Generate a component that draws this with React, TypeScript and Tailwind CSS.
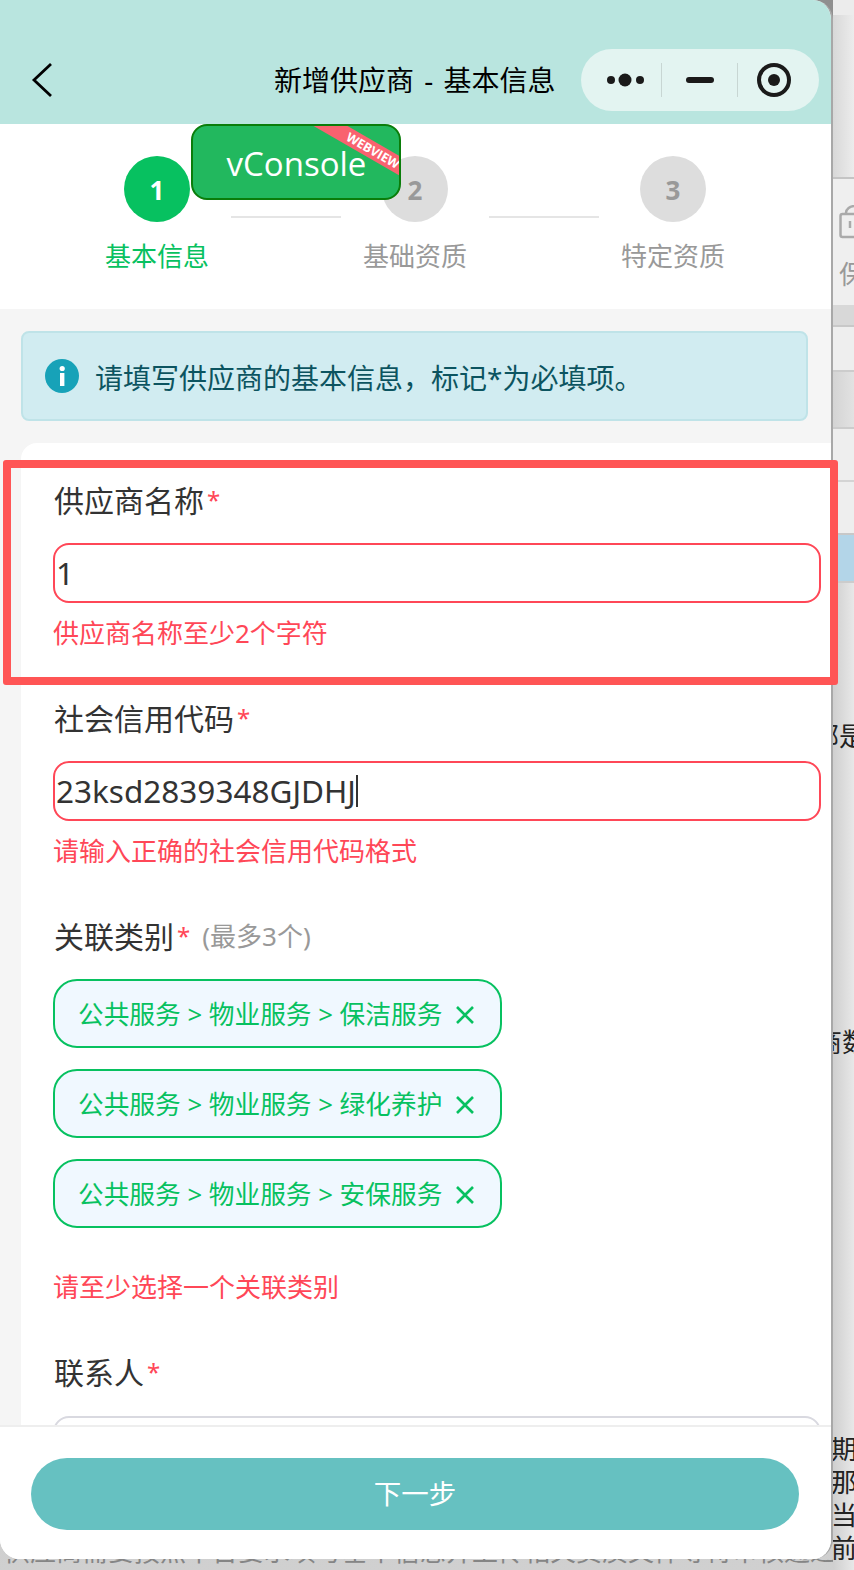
const cjk = "font-['Noto_Sans','Noto_Sans_CJK_SC',sans-serif]";

function Capsule() {
  return (
    <div className="absolute left-[581px] top-[49px] flex h-[62px] w-[238px] items-center rounded-full bg-[#e3f4f1]">
      <div className="flex w-[80px] justify-center pl-[9px]">
        <svg width="44" height="14" viewBox="0 0 44 14" fill="#1a1a1a">
          <circle cx="7" cy="7" r="4" />
          <circle cx="21" cy="7" r="6.5" />
          <circle cx="36" cy="7" r="4" />
        </svg>
      </div>
      <div className="h-[34px] w-[1px] bg-[#c8d6d3]" />
      <div className="flex w-[75px] justify-center">
        <div className="h-[6px] w-[28px] rounded-full bg-[#1a1a1a]" />
      </div>
      <div className="h-[34px] w-[1px] bg-[#c8d6d3]" />
      <div className="flex w-[71px] justify-center">
        <svg width="34" height="34" viewBox="0 0 34 34">
          <circle cx="17" cy="17" r="15" fill="none" stroke="#1a1a1a" strokeWidth="4" />
          <circle cx="17" cy="17" r="6" fill="#1a1a1a" />
        </svg>
      </div>
    </div>
  );
}

function Step({ n, label, active }: { n: string; label: string; active?: boolean }) {
  return (
    <div className="flex w-[148px] flex-col items-center">
      <div
        className={
          "flex h-[66px] w-[66px] items-center justify-center rounded-full pt-[2px] text-[26px] font-bold " +
          (active ? "bg-[#07c160] text-white" : "bg-[#dddddd] text-[#999999]")
        }
      >
        {n}
      </div>
      <div className={"mt-[16px] text-[26px] leading-[36px] " + (active ? "text-[#07c160]" : "text-[#999999]")}>{label}</div>
    </div>
  );
}

function Label({ text, extra }: { text: string; extra?: string }) {
  return (
    <div className="flex h-[42px] items-center pl-[1px] text-[#333333]">
      <span className="text-[30px]">{text}</span>
      <span className="ml-[3px] text-[24px] text-[#ff4757]">*</span>
      {extra && <span className="ml-[12px] text-[26px] text-[#999999]">{extra}</span>}
    </div>
  );
}

function Field({ label, value, error, caret }: { label: string; value: string; error: string; caret?: boolean }) {
  return (
    <div className="mb-[46px]">
      <Label text={label} />
      <div className="mt-[22px] flex h-[60px] items-center rounded-[16px] border-2 border-[#ff4757] pl-[1px] text-[31.5px] text-[#333333]">
        {value}
        {caret && <span className="h-[32px] w-[2px] bg-[#333333]" />}
      </div>
      <div className="mt-[12px] h-[36px] text-[26px] leading-[36px] text-[#ff4757]">{error}</div>
    </div>
  );
}

function Tag({ text }: { text: string }) {
  return (
    <div className="flex h-[69px] w-[449px] items-center rounded-[24px] border-2 border-[#07c160] bg-[#f0f8ff] pl-[23px] pt-[3px] text-[25.7px] text-[#07c160]">
      <span className="w-[377px] whitespace-nowrap">{text}</span>
      <svg width="20" height="20" viewBox="0 0 20 20" stroke="#07c160" strokeWidth="2.6">
        <path d="M2 2 L18 18 M18 2 L2 18" />
      </svg>
    </div>
  );
}

function Strip() {
  return (
    <div className="flex h-[1570px] w-[21px] shrink-0 flex-col overflow-hidden text-[26px] leading-[33px] text-[#222222]">
      <div className="h-[15px] bg-[#ececec]" />
      <div className="h-[162px] bg-gradient-to-r from-[#d8d8d8] to-[#ececec]" />
      <div className="h-[128px] border-t-2 border-[#c4c4c4] bg-[#efefef] pl-[6px] pt-[26px]">
        <svg width="30" height="34" viewBox="0 0 30 34" fill="none" stroke="#aaaaaa" strokeWidth="2.5">
          <rect x="1.5" y="9" width="30" height="23" rx="2" />
          <path d="M7 9 V8 a9 7 0 0 1 18 0 V9" />
          <path d="M11 16 V23" />
        </svg>
        <div className="mt-[19px] whitespace-nowrap text-[#999999]">保</div>
      </div>
      <div className="h-[20px] bg-[#d8d8d8]" />
      <div className="h-[45px] border-t-2 border-[#c8c8c8] bg-[#eeeeee]" />
      <div className="h-[57px] border-t-2 border-[#cccccc] bg-gradient-to-r from-[#d4d4d4] to-[#e2e2e2]" />
      <div className="h-[53px] border-t-2 border-[#cccccc] bg-[#eeeeee]" />
      <div className="h-[53px] border-t-2 border-[#d4d4d4] bg-[#eeeeee]" />
      <div className="h-[48px] border-t-2 border-[#c8c8c8] bg-[#b3d5e8]" />
      <div className="min-h-0 flex-1 border-t-2 border-[#cccccc] bg-gradient-to-r from-[#cfcfcf] to-[#e8e8e8]">
        <div className="ml-[-20px] mt-[137px] whitespace-nowrap">部是</div>
        <div className="ml-[-17px] mt-[273px] whitespace-nowrap">商数</div>
        <div className="ml-[-2px] mt-[374px] whitespace-nowrap">期</div>
        <div className="ml-[-2px] whitespace-nowrap">那</div>
        <div className="ml-[-2px] whitespace-nowrap">当</div>
        <div className="ml-[-2px] whitespace-nowrap">前</div>
      </div>
    </div>
  );
}

export default function App() {
  return (
    <div className={"relative flex h-[1570px] w-[854px] overflow-hidden " + cjk}>
      <div className="flex h-[1570px] w-[833px] shrink-0 flex-col bg-gradient-to-b from-[#8f8f8f] to-[#d0d0d0]">
        <div className="flex h-[1559px] shrink-0 flex-col overflow-hidden rounded-b-[20px] rounded-tr-[20px] border-r-2 border-[#a8a8a8] bg-white">
          <div className="relative h-[124px] shrink-0 bg-[#b9e5df]">
            <svg width="24" height="36" viewBox="0 0 24 36" fill="none" stroke="#000000" strokeWidth="2.8" className="absolute left-[31px] top-[62px]">
              <path d="M20 2 L3 18 L20 34" />
            </svg>
            <div className="absolute left-[274px] top-[58px] whitespace-nowrap text-[28px] leading-[44px] text-black [word-spacing:3px]">新增供应商 - 基本信息</div>
            <Capsule />
          </div>

          <div className="flex h-[185px] shrink-0 justify-center bg-white pr-[1px] pt-[32px]">
            <Step n="1" label="基本信息" active />
            <div className="mt-[60px] h-[2px] w-[110px] bg-[#e5e5e5]" />
            <Step n="2" label="基础资质" />
            <div className="mt-[60px] h-[2px] w-[110px] bg-[#e5e5e5]" />
            <Step n="3" label="特定资质" />
          </div>

          <div className="min-h-0 flex-1 overflow-hidden bg-[#f5f5f5] pl-[21px] pt-[22px]">
            <div className="mr-[23px] flex h-[90px] items-center rounded-[8px] border-2 border-[#bfe3e8] bg-[#d1ecf1] pl-[22px] text-[28px] text-[#0c5460]">
              <svg width="34" height="34" viewBox="0 0 34 34">
                <circle cx="17" cy="17" r="17" fill="#17a2b8" />
                <rect x="15" y="14" width="4.4" height="13" fill="#ffffff" />
                <circle cx="17.2" cy="9.5" r="2.6" fill="#ffffff" />
              </svg>
              <span className="ml-[16px] pt-[3px]">请填写供应商的基本信息，标记*为必填项。</span>
            </div>

            <div className="mt-[22px] rounded-tl-[16px] bg-white pl-[32px] pr-[10px] pt-[36px]">
              <Field label="供应商名称" value="1" error="供应商名称至少2个字符" />
              <Field label="社会信用代码" value="23ksd2839348GJDHJ" error="请输入正确的社会信用代码格式" caret />
              <div>
                <Label text="关联类别" extra="(最多3个)" />
                <div className="mt-[22px] flex flex-col gap-[21px]">
                  <Tag text="公共服务 > 物业服务 > 保洁服务" />
                  <Tag text="公共服务 > 物业服务 > 绿化养护" />
                  <Tag text="公共服务 > 物业服务 > 安保服务" />
                </div>
                <div className="mt-[41px] h-[36px] text-[26px] leading-[36px] text-[#ff4757]">请至少选择一个关联类别</div>
              </div>
              <div className="mt-[46px]">
                <Label text="联系人" />
                <div className="mt-[23px] h-[60px] rounded-[16px] border-2 border-[#d9d9e0]" />
              </div>
            </div>
          </div>

          <div className="flex h-[134px] shrink-0 items-start border-t-2 border-[#eeeeee] bg-white pl-[31px] pt-[31px]">
            <div className="flex h-[72px] w-[768px] items-center justify-center rounded-full bg-[#66c1c1] text-[27.5px] text-white">下一步</div>
          </div>
        </div>
        <div className="h-[7px] overflow-hidden whitespace-nowrap pl-[4px] text-[26px] leading-[26px] text-[#858585]">
          <div className="mt-[-21px] [word-spacing:6px]">供应商需要按照平台要求填写基本信息并上传相关资质文件等待审核通过后方可</div>
        </div>
      </div>

      <Strip />

      <div className="absolute left-[191px] top-[124px] h-[76px] w-[210px] overflow-hidden rounded-[16px] border-2 border-[#0a7d0a] bg-[#22b85e] font-['Open_Sans',sans-serif]">
        <div className="flex h-full w-full items-center justify-center pl-[1px] pt-[3px] text-[33px] text-white">vConsole</div>
        <div className="absolute left-[95px] top-[16px] h-[17px] w-[170px] rotate-[30deg] bg-[#f9626f] text-center text-[12.5px] font-bold leading-[17px] text-white">WEBVIEW</div>
      </div>

      <div className="absolute left-[3px] top-[460px] h-[225px] w-[835px] rounded-[3px] border-[8px] border-[#ff5555]" />
    </div>
  );
}
